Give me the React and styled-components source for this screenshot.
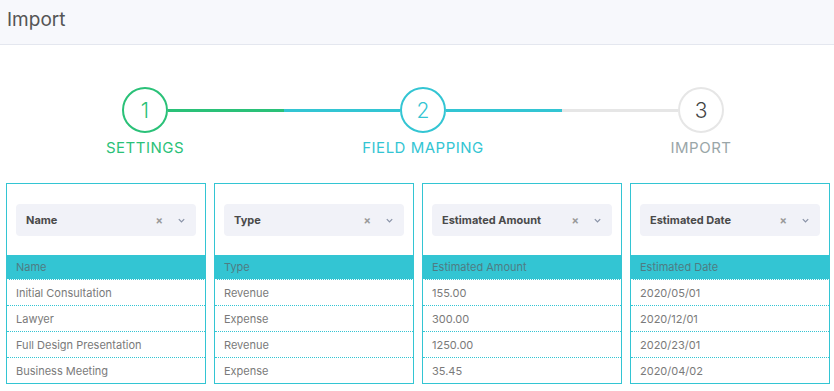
import React from 'react'
import styled, { createGlobalStyle } from 'styled-components'

const GlobalStyle = createGlobalStyle`
  body {
    margin: 0;
    background: #fff;
    font-family: Inter, 'Liberation Sans', sans-serif;
  }
`

const teal = '#33c5d3'
const green = '#2ac178'
const gray = '#e6e6e6'

const Page = styled.div`
  width: 834px;
  height: 391px;
  overflow: hidden;
`

const TopBar = styled.div`
  height: 45px;
  box-sizing: border-box;
  background: #f7f8fc;
  border-bottom: 1px solid #e4e7ef;
  display: flex;
  align-items: center;
  padding: 0 7px 6px;
  font-size: 19px;
  color: #555;
`

const Steps = styled.div`
  display: flex;
  padding: 42px 0 0 6px;
`

const Step = styled.div`
  width: 278px;
  flex: none;
  display: flex;
  flex-direction: column;
  align-items: center;
`

const Track = styled.div`
  display: flex;
  align-items: center;
  width: 100%;
`

const Half = styled.div`
  flex: 1;
  height: 3px;
  background: ${({ color }) => color || 'transparent'};
`

const Circle = styled.div`
  width: 46px;
  height: 46px;
  box-sizing: border-box;
  border-radius: 50%;
  border: 2px solid ${({ color }) => color};
  display: flex;
  align-items: center;
  justify-content: center;
  font-size: 21px;
  font-weight: 300;
  color: ${({ textColor }) => textColor};
`

const Label = styled.div`
  margin-top: 5px;
  font-size: 15px;
  letter-spacing: 0.5px;
  color: ${({ color }) => color};
`

const Cards = styled.div`
  display: flex;
  gap: 8px;
  padding: 26px 0 0 6px;
`

const Card = styled.div`
  width: 200px;
  box-sizing: border-box;
  border: 1px solid ${teal};
`

const SelectWrap = styled.div`
  padding: 20px 9px 19px;
`

const Select = styled.div`
  height: 32px;
  background: #f1f2f8;
  border-radius: 4px;
  display: flex;
  align-items: center;
  padding: 0 10px;
  font-size: 11px;
  font-weight: 700;
  color: #4a4a4a;
`

const SelectText = styled.span`
  flex: 1;
`

const Clear = styled.span`
  color: #9a9a9a;
  font-size: 11px;
  font-weight: 700;
  margin-right: 14px;
`

const Chevron = styled.svg`
  width: 9px;
  height: 9px;
`

const HeadRow = styled.div`
  height: 24px;
  background: ${teal};
  border-bottom: 1px dotted #fff;
  display: flex;
  align-items: center;
  padding: 0 9px;
  font-size: 11px;
  color: #4f7c83;
`

const Row = styled.div`
  height: 25px;
  display: flex;
  align-items: center;
  padding: 0 9px;
  font-size: 11px;
  color: #7a7a7a;
  border-bottom: 1px dotted ${teal};
  &:last-child {
    border-bottom: none;
  }
`

const steps = [
  { n: 1, label: 'SETTINGS', color: green, text: green, left: null, right: green },
  { n: 2, label: 'FIELD MAPPING', color: teal, text: teal, left: teal, right: teal },
  { n: 3, label: 'IMPORT', color: gray, text: '#444', labelColor: '#9aa6a8', left: gray, right: null }
]

const columns = [
  { title: 'Name', rows: ['Initial Consultation', 'Lawyer', 'Full Design Presentation', 'Business Meeting'] },
  { title: 'Type', rows: ['Revenue', 'Expense', 'Revenue', 'Expense'] },
  { title: 'Estimated Amount', rows: ['155.00', '300.00', '1250.00', '35.45'] },
  { title: 'Estimated Date', rows: ['2020/05/01', '2020/12/01', '2020/23/01', '2020/04/02'] }
]

export default function App() {
  return (
    <Page>
      <GlobalStyle />
      <TopBar>Import</TopBar>
      <Steps>
        {steps.map(s => (
          <Step key={s.n}>
            <Track>
              <Half color={s.left} />
              <Circle color={s.color} textColor={s.text}>
                {s.n}
              </Circle>
              <Half color={s.right} />
            </Track>
            <Label color={s.labelColor || s.color}>{s.label}</Label>
          </Step>
        ))}
      </Steps>
      <Cards>
        {columns.map(c => (
          <Card key={c.title}>
            <SelectWrap>
              <Select>
                <SelectText>{c.title}</SelectText>
                <Clear>×</Clear>
                <Chevron viewBox="0 0 10 10">
                  <path d="M2 3.5 L5 6.5 L8 3.5" fill="none" stroke="#8a93a8" strokeWidth="1.4" />
                </Chevron>
              </Select>
            </SelectWrap>
            <HeadRow>{c.title}</HeadRow>
            {c.rows.map((r, i) => (
              <Row key={i}>{r}</Row>
            ))}
          </Card>
        ))}
      </Cards>
    </Page>
  )
}
